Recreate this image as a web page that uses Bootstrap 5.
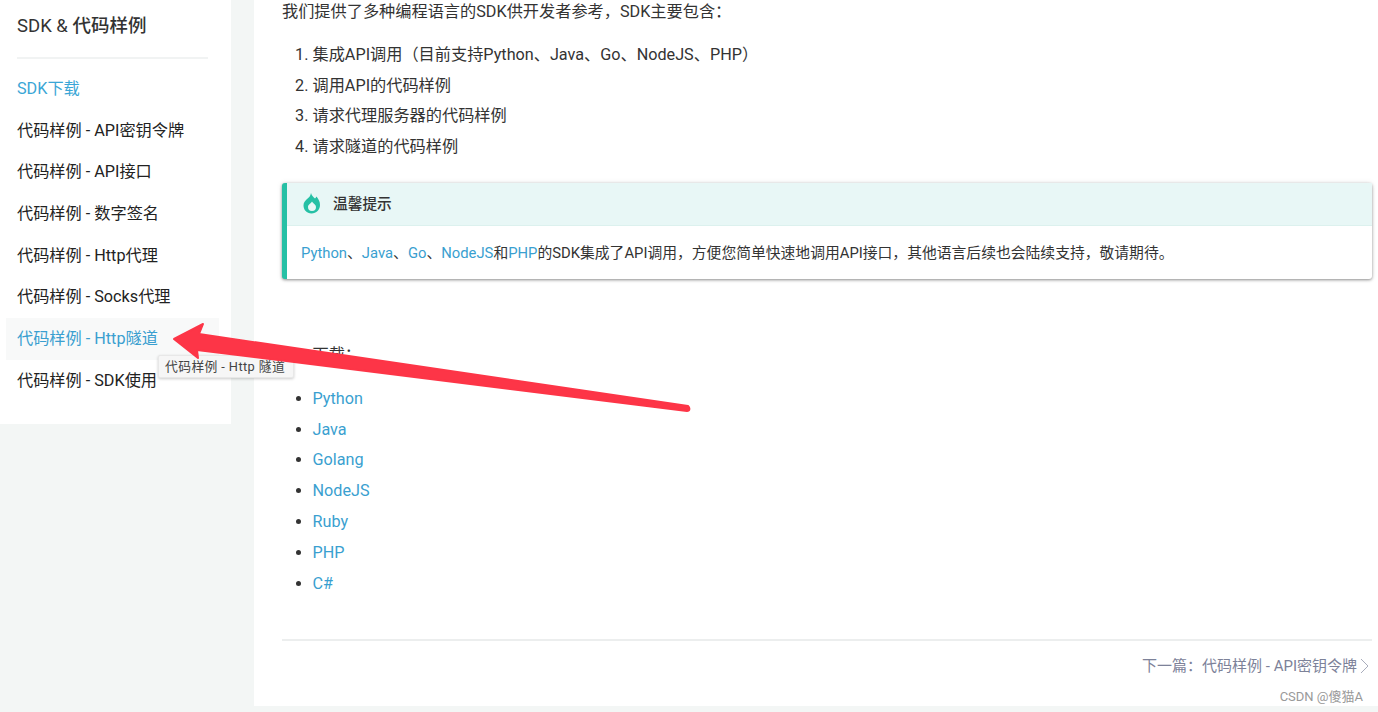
<!DOCTYPE html>
<html lang="zh-CN">
<head>
    <meta charset="UTF-8">
    <meta name="viewport" content="width=device-width, initial-scale=1.0">
    <title>SDK &amp; 代码样例</title>
    <link href="https://cdn.jsdelivr.net/npm/bootstrap@5.3.0/dist/css/bootstrap.min.css" rel="stylesheet">
    <style>
        html, body { height: 100%; }
        body { background-color: #f3f6f5; color: #333; overflow: hidden; font-family: Roboto, "Noto Sans CJK SC", sans-serif; font-size: 16.2px; position: relative; }
        a { color: #3a9fd0; text-decoration: none; }
        .page-wrap { gap: 23px; height: 706px; }
        .side-box { width: 231px; height: 424px; background: #fff; padding: 0 12px 0 6px; flex-shrink: 0; }
        .side-title { font-size: 18.5px; font-weight: 400; color: #333; margin: 0 11px 9px 11px; padding: 13px 0 18px; line-height: 26px; border-bottom: 2px solid #f1f3f3; }
        .side-title span { font-weight: 500; }
        .side-link { display: block; height: 41.7px; line-height: 41.7px; padding-left: 11px; color: #222; }
        .side-link.is-on { color: #3aa6d6; }
        .side-link.is-hover { color: #3a9fd0; background: #f8f9f9; }
        .main-box { flex: 1; background: #fff; padding: 0 6px 0 28px; min-width: 0; }
        .intro-text { line-height: 24px; margin: 0; height: 40px; }
        .step-list { padding-left: 30.5px; margin: 0; line-height: 30.7px; }
        .tip-box { margin-top: 20px; border-left: 5px solid #26c0a5; border-radius: 3px; box-shadow: 0 1px 3px rgba(0,0,0,.42), 0 0 6px rgba(0,0,0,.08); height: 96px; background: #fff; }
        .tip-head { height: 43px; background: #e8f7f6; border-bottom: 1px solid #dcf1ee; padding-left: 16px; gap: 12px; font-weight: 500; font-size: 14.7px; color: #333; }
        .tip-body { padding: 16px 0 0 14px; font-size: 14.8px; line-height: 22px; color: #333; }
        .down-title { margin: 64px 0 0; line-height: 24px; height: 41px; padding-left: 30.5px; }
        .down-list { padding-left: 30.5px; margin: 0; line-height: 30.8px; }
        .foot-line { border-top: 2px solid #eceeee; margin-top: 40px; padding-top: 13px; padding-right: 3px; color: #7d8299; line-height: 24px; font-size: 15px; }
        .foot-line svg { margin-left: 3px; }
        .tip-pop { position: absolute; left: 158px; top: 355px; height: 23px; line-height: 22px; padding: 0 8px 0 6px; font-size: 12.8px; letter-spacing: .4px; background: #f6f6f6; color: #444; border: 1px solid #e8e8e8; box-shadow: 0 1px 3px rgba(0,0,0,.2); border-radius: 2px; white-space: nowrap; }
        .red-arrow { position: absolute; left: 0; top: 0; pointer-events: none; }
        .mark-text { position: absolute; right: 15px; top: 689px; font-size: 13px; color: #999; line-height: 16px; }
    </style>
</head>
<body>
    <div class="d-flex page-wrap">
        <div class="side-box">
            <h5 class="side-title">SDK &amp; <span>代码样例</span></h5>
            <a class="side-link is-on" href="#">SDK下载</a>
            <a class="side-link" href="#">代码样例 - API密钥令牌</a>
            <a class="side-link" href="#">代码样例 - API接口</a>
            <a class="side-link" href="#">代码样例 - 数字签名</a>
            <a class="side-link" href="#">代码样例 - Http代理</a>
            <a class="side-link" href="#">代码样例 - Socks代理</a>
            <a class="side-link is-hover" href="#">代码样例 - Http隧道</a>
            <a class="side-link" href="#">代码样例 - SDK使用</a>
        </div>
        <div class="main-box">
            <p class="intro-text">我们提供了多种编程语言的SDK供开发者参考，SDK主要包含：</p>
            <ol class="step-list">
                <li>集成API调用（目前支持Python、Java、Go、NodeJS、PHP）</li>
                <li>调用API的代码样例</li>
                <li>请求代理服务器的代码样例</li>
                <li>请求隧道的代码样例</li>
            </ol>
            <div class="tip-box">
                <div class="tip-head d-flex align-items-center">
                    <svg width="18" height="21" viewBox="0 0 18 21"><path fill="#26c0a5" fill-rule="evenodd" d="M8 0c.8 3 2.500 4 4 5.500.7-.6 1.200-1.300 1.500-2 2 2.500 3.500 5 3.500 8.500 0 4.800-3.600 8.500-8.500 8.500S.5 16.800.5 12.500c0-2.800 1.500-4.500 3-6C6 4.500 7.500 3 8 0zM9 8.500c-1 2-4 3-4 5.500a4 4 0 0 0 8 0c0-2.500-3-3.500-4-5.500z"/></svg>
                    <span>温馨提示</span>
                </div>
                <div class="tip-body"><a href="#">Python</a>、<a href="#">Java</a>、<a href="#">Go</a>、<a href="#">NodeJS</a>和<a href="#">PHP</a>的SDK集成了API调用，方便您简单快速地调用API接口，其他语言后续也会陆续支持，敬请期待。</div>
            </div>
            <p class="down-title">下载：</p>
            <ul class="down-list">
                <li><a href="#">Python</a></li>
                <li><a href="#">Java</a></li>
                <li><a href="#">Golang</a></li>
                <li><a href="#">NodeJS</a></li>
                <li><a href="#">Ruby</a></li>
                <li><a href="#">PHP</a></li>
                <li><a href="#">C#</a></li>
            </ul>
            <div class="foot-line d-flex justify-content-end align-items-center">
                <span>下一篇：代码样例 - API密钥令牌</span>
                <svg width="9" height="16" viewBox="0 0 9 16"><path d="M1 1l7 7-7 7" fill="none" stroke="#a9adbc" stroke-width="1"/></svg>
            </div>
        </div>
    </div>
    <div class="tip-pop">代码样例 - Http 隧道</div>
    <svg class="red-arrow" width="1378" height="712" viewBox="0 0 1378 712">
        <path fill="#fd3547" stroke="#fd3547" stroke-width="2" stroke-linejoin="round" d="M174 339L203 324L199 334L688 406C690 408 690 411 687 411L197 350L198 358Z"/>
    </svg>
    <div class="mark-text">CSDN @傻猫A</div>
    <script src="https://cdn.jsdelivr.net/npm/bootstrap@5.3.0/dist/js/bootstrap.bundle.min.js"></script>
</body>
</html>
